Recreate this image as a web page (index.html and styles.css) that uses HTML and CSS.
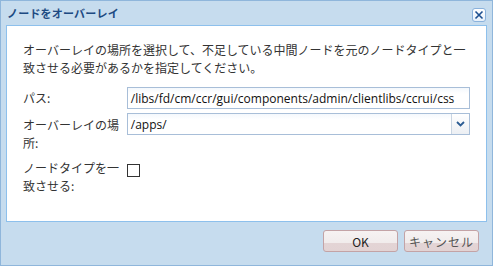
FILE: index.html
```html
<!DOCTYPE html>
<html lang="ja">
<head>
<meta charset="utf-8">
<title>ノードをオーバーレイ</title>
<link rel="stylesheet" href="styles.css">
</head>
<body>
<div class="win">
  <div class="win-head">
    <span class="win-title">ノードをオーバーレイ</span>
    <span class="win-close">
      <svg width="14" height="14" viewBox="0 0 14 14"><path d="M3.5 3.5 L10.5 10.5 M10.5 3.5 L3.5 10.5" stroke="#1d4f8f" stroke-width="1.6" fill="none"/></svg>
    </span>
  </div>

  <div class="win-body">
    <p class="desc">オーバーレイの場所を選択して、不足している中間ノードを元のノードタイプと一致させる必要があるかを指定してください。</p>

    <div class="row">
      <label class="lbl">パス:</label>
      <div class="field"><span class="text-in">/libs/fd/cm/ccr/gui/components/admin/clientlibs/ccrui/css</span></div>
    </div>

    <div class="row">
      <label class="lbl">オーバーレイの場所:</label>
      <div class="field combo">
        <span class="text-in">/apps/</span>
        <span class="trigger">
          <svg width="9" height="6" viewBox="0 0 9 6"><path d="M1 1 L4.5 4.5 L8 1" stroke="#2b5c93" stroke-width="1.8" fill="none"/></svg>
        </span>
      </div>
    </div>

    <div class="row">
      <label class="lbl">ノードタイプを一致させる:</label>
      <span class="check"></span>
    </div>
  </div>

  <div class="win-foot">
    <span class="btn">OK</span>
    <span class="btn btn-cancel">キャンセル</span>
  </div>
</div>
</body>
</html>
```

FILE: styles.css
```css
/* dialog: overlay node */

body
{ margin: 0;
font-family: "Noto Sans CJK JP", "Noto Sans", sans-serif;
}

div.win
{ box-sizing: border-box;
width: 493px;
height: 266px;
border: 1px solid #8fb6db;
background-color: #c6dcee;
display: flex;
flex-direction: column;
}

div.win-head
{ height: 24px;
padding: 0 6px 0 6px;
display: flex;
align-items: center;
justify-content: space-between;
}

span.win-title
{ font-size: 11px;
font-weight: bold;
color: #1d4a82;
letter-spacing: 0.2px;
}

span.win-close
{ box-sizing: border-box;
width: 14px;
height: 14px;
margin-top: 3px;
border: 1px solid #8ab2dc;
border-radius: 3px;
background: linear-gradient(#ffffff, #e6f0fa);
display: flex;
}

span.win-close svg
{ margin: -1px;
}

div.win-body
{ box-sizing: border-box;
height: 197px;
margin: 0 5px;
padding: 15px 16px 0 16px;
background-color: #fff;
border: 1px solid #8dc0ec;
font-size: 12px;
color: #333;
}

p.desc
{ margin: 0 0 9px 0;
line-height: 18px;
}

div.row
{ display: flex;
align-items: flex-start;
margin-bottom: 4px;
}

label.lbl
{ width: 100px;
margin-right: 4px;
padding-top: 3px;
line-height: 18px;
}

div.field
{ box-sizing: border-box;
width: 344px;
height: 22px;
margin-top: 1px;
border: 1px solid #a8bed8;
background: linear-gradient(#f4f8fc, #ffffff 6px);
display: flex;
align-items: center;
}

div.combo
{ margin-top: 0;
}

span.text-in
{ flex: 1;
padding-left: 3px;
font-family: "Open Sans", "Noto Sans", sans-serif;
font-size: 12px;
color: #111;
white-space: nowrap;
overflow: hidden;
}

span.trigger
{ width: 17px;
height: 20px;
border-left: 1px solid #c9d5e2;
background: linear-gradient(#ffffff, #eceff3);
display: flex;
align-items: center;
justify-content: center;
}

span.check
{ box-sizing: border-box;
width: 13px;
height: 13px;
margin-top: 8px;
border: 1px solid #333;
background: #fff;
}

div.win-foot
{ flex: 1;
display: flex;
justify-content: flex-end;
align-items: flex-start;
gap: 6px;
padding: 8px 13px 0 0;
}

span.btn
{ box-sizing: border-box;
width: 75px;
height: 22px;
border: 1px solid #c3a3a6;
border-radius: 3px;
background: linear-gradient(#f6f2f2 0, #f1ecec 58%, #e3d4d5 58%, #e2d3d4 100%);
font-size: 12px;
color: #222;
display: flex;
align-items: center;
justify-content: center;
}

span.btn-cancel
{ color: #555;
letter-spacing: 1px;
}
```
